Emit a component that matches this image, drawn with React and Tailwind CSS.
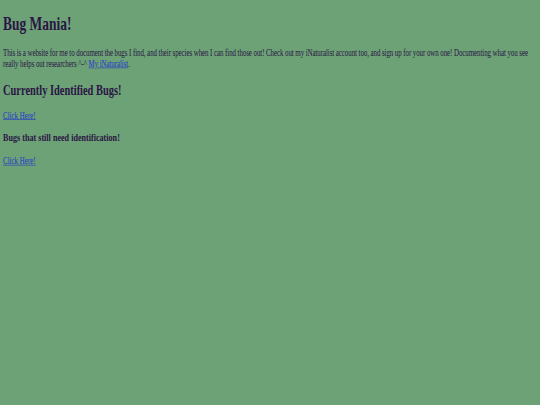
export default function App() {
  return (
    <div className="h-screen w-full overflow-hidden bg-[#6da277]">
      {/* page drawn large and squeezed into the 540x405 frame, like the reference */}
      <div
        className="w-[1244px] h-[675px] origin-top-left scale-x-[0.434] scale-y-[0.6] px-[7px] text-[#2a1544] text-[16px] leading-[18px]"
        style={{ fontFamily: '"Liberation Serif", "Times New Roman", serif' }}
      >
        <h1 className="text-[31px] leading-[37px] font-bold mt-[13px] mb-[21px]">Bug Mania!</h1>
        <p className="my-4 tracking-[-0.18px]">
          This is a website for me to document the bugs I find, and their species when I can find those out! Check out my iNaturalist account too, and sign up for your own one! Documenting what you see really helps out researchers ^-^{' '}
          <a href="#" className="text-[#1f36cc] underline">My iNaturalist</a>.
        </p>
        <h2 className="text-[24px] leading-[28px] font-bold my-[20px]">Currently Identified Bugs!</h2>
        <p className="my-4">
          <a href="#" className="text-[#1f36cc] underline">Click Here!</a>
        </p>
        <h3 className="text-[18.72px] leading-[22px] font-bold mt-[17px] mb-[19px]">Bugs that still need identification!</h3>
        <p className="my-4">
          <a href="#" className="text-[#1f36cc] underline">Click Here!</a>
        </p>
      </div>
    </div>
  )
}
